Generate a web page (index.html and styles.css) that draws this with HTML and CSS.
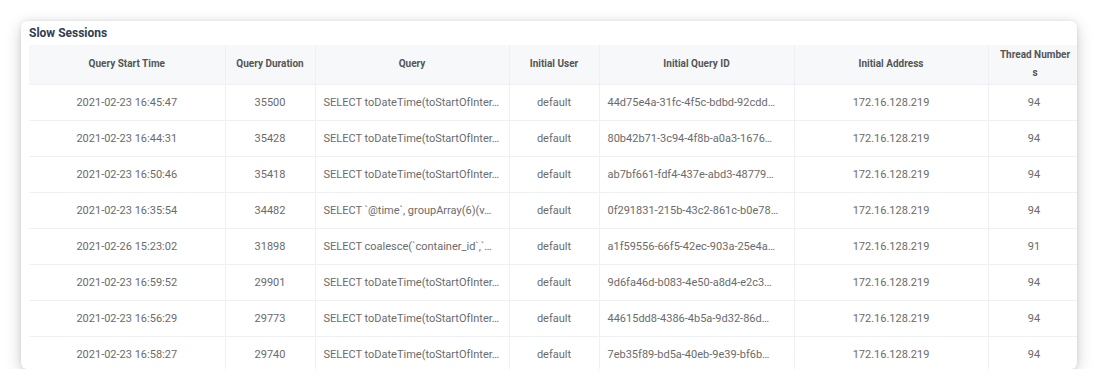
FILE: index.html
```html
<!DOCTYPE html>
<html lang="en">
<head>
<meta charset="utf-8">
<title>Slow Sessions</title>
<link rel="stylesheet" href="styles.css">
</head>
<body>
<section class="card">
  <h2 class="card-title">Slow Sessions</h2>
  <div class="table-wrap">
    <table class="sessions">
      <colgroup>
        <col class="c-time"><col class="c-dur"><col class="c-query"><col class="c-user"><col class="c-qid"><col class="c-addr"><col class="c-thr">
      </colgroup>
      <thead>
        <tr>
          <th>Query Start Time</th>
          <th>Query Duration</th>
          <th>Query</th>
          <th>Initial User</th>
          <th>Initial Query ID</th>
          <th>Initial Address</th>
          <th class="wrap">Thread Numbers</th>
        </tr>
      </thead>
      <tbody>
        <tr><td>2021-02-23 16:45:47</td><td>35500</td><td class="left">SELECT toDateTime(toStartOfInter…</td><td>default</td><td class="left">44d75e4a-31fc-4f5c-bdbd-92cdd…</td><td>172.16.128.219</td><td>94</td></tr>
        <tr><td>2021-02-23 16:44:31</td><td>35428</td><td class="left">SELECT toDateTime(toStartOfInter…</td><td>default</td><td class="left">80b42b71-3c94-4f8b-a0a3-1676…</td><td>172.16.128.219</td><td>94</td></tr>
        <tr><td>2021-02-23 16:50:46</td><td>35418</td><td class="left">SELECT toDateTime(toStartOfInter…</td><td>default</td><td class="left">ab7bf661-fdf4-437e-abd3-48779…</td><td>172.16.128.219</td><td>94</td></tr>
        <tr><td>2021-02-23 16:35:54</td><td>34482</td><td class="left">SELECT `@time`, groupArray(6)(v…</td><td>default</td><td class="left">0f291831-215b-43c2-861c-b0e78…</td><td>172.16.128.219</td><td>94</td></tr>
        <tr><td>2021-02-26 15:23:02</td><td>31898</td><td class="left">SELECT coalesce(`container_id`,`…</td><td>default</td><td class="left">a1f59556-66f5-42ec-903a-25e4a…</td><td>172.16.128.219</td><td>91</td></tr>
        <tr><td>2021-02-23 16:59:52</td><td>29901</td><td class="left">SELECT toDateTime(toStartOfInter…</td><td>default</td><td class="left">9d6fa46d-b083-4e50-a8d4-e2c3…</td><td>172.16.128.219</td><td>94</td></tr>
        <tr><td>2021-02-23 16:56:29</td><td>29773</td><td class="left">SELECT toDateTime(toStartOfInter…</td><td>default</td><td class="left">44615dd8-4386-4b5a-9d32-86d…</td><td>172.16.128.219</td><td>94</td></tr>
        <tr><td>2021-02-23 16:58:27</td><td>29740</td><td class="left">SELECT toDateTime(toStartOfInter…</td><td>default</td><td class="left">7eb35f89-bd5a-40eb-9e39-bf6b…</td><td>172.16.128.219</td><td>94</td></tr>
      </tbody>
    </table>
  </div>
</section>
</body>
</html>
```

FILE: styles.css
```css
* { box-sizing: border-box; }

html, body {
  margin: 0;
  padding: 0;
  background: #ffffff;
  font-family: Roboto, Inter, "Liberation Sans", sans-serif;
}

body {
  padding: 21px 0 0 21px;
}

.card {
  width: 1056px;
  height: 348px;
  background: #ffffff;
  border-radius: 6px;
  box-shadow: 0 4px 16px rgba(0, 0, 0, 0.2), 0 0 4px rgba(0, 0, 0, 0.08);
  overflow: hidden;
  padding: 3px 0 0 8px;
}

.card-title {
  margin: 0 0 3px 0;
  font-size: 12px;
  line-height: 18px;
  font-weight: 700;
  color: #333d4e;
}

.table-wrap {
  overflow: hidden;
}

.sessions {
  table-layout: fixed;
  border-collapse: collapse;
  width: 1051px;
}

.c-time { width: 196px; }
.c-dur { width: 90px; }
.c-query { width: 194px; }
.c-user { width: 90px; }
.c-qid { width: 195px; }
.c-addr { width: 194px; }
.c-thr { width: 92px; }

.sessions th,
.sessions td {
  border: 1px solid #eef0f5;
  text-align: center;
  vertical-align: middle;
  white-space: nowrap;
  overflow: hidden;
  text-overflow: ellipsis;
  padding: 0 6px;
}

.sessions th {
  background: #f7f8fa;
  height: 39px;
  font-size: 10px;
  line-height: 18px;
  font-weight: 700;
  color: #555555;
}

.sessions th.wrap {
  white-space: normal;
  word-break: break-all;
  padding: 0 8px 0 10px;
}

.sessions thead tr th { border-top: none; }
.sessions tr th:first-child,
.sessions tr td:first-child { border-left: none; }

.sessions td {
  height: 36px;
  font-size: 11px;
  color: #6b6b6b;
}

.sessions td.left {
  text-align: left;
  padding: 0 4px 0 8px;
}
```
